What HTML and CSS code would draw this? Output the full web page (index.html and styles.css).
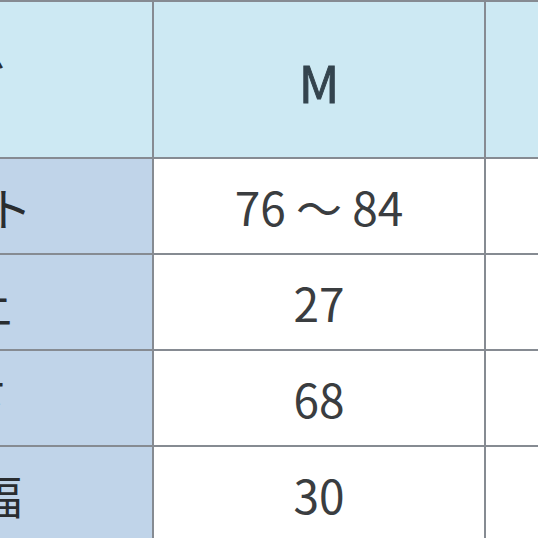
FILE: index.html
```html
<!DOCTYPE html>
<html lang="ja">
<head>
<meta charset="utf-8">
<link rel="stylesheet" href="styles.css">
</head>
<body>
<div class="viewport">
  <div class="chart">
    <div class="cell head label lab-size">サイズ</div>
    <div class="cell head size-name">M</div>
    <div class="cell head"></div>

    <div class="cell label lab-waist">ウエスト</div>
    <div class="cell">76 ～ 84</div>
    <div class="cell"></div>

    <div class="cell label lab-rise">股上</div>
    <div class="cell">27</div>
    <div class="cell"></div>

    <div class="cell label lab-inseam">股下</div>
    <div class="cell">68</div>
    <div class="cell"></div>

    <div class="cell label lab-hem">裾幅</div>
    <div class="cell">30</div>
    <div class="cell"></div>
  </div>
</div>
</body>
</html>
```

FILE: styles.css
```css
html, body {
  margin: 0;
  padding: 0;
  background: #ffffff;
}

.viewport {
  width: 538px;
  height: 538px;
  overflow: hidden;
}

.chart {
  display: grid;
  grid-template-columns: 352px 330px 300px;
  grid-template-rows: 155px 94px 94px 94px 94px;
  gap: 2px;
  padding-top: 2px;
  margin-left: -200px;
  background: #868b92;
  font-family: "Noto Sans CJK JP", "Noto Sans", sans-serif;
  font-size: 46px;
  color: #3a3d40;
}

.cell {
  background: #ffffff;
  display: flex;
  align-items: center;
  justify-content: center;
  line-height: 1;
}

.cell.head {
  background: #cde9f3;
}

.size-name {
  font-size: 50px;
  color: #34444e;
  -webkit-text-stroke: 0.9px #34444e;
  padding-top: 2px;
}

.cell.label {
  background: #c0d4e9;
  justify-content: flex-end;
  color: #2a2d30;
}

.cell.head.label {
  background: #cde9f3;
}

.lab-size { padding-right: 147px; }
.lab-waist { padding-right: 120px; }
.lab-rise { padding-right: 140px; }
.lab-inseam { padding-right: 147px; }
.lab-hem { padding-right: 130px; }
```
